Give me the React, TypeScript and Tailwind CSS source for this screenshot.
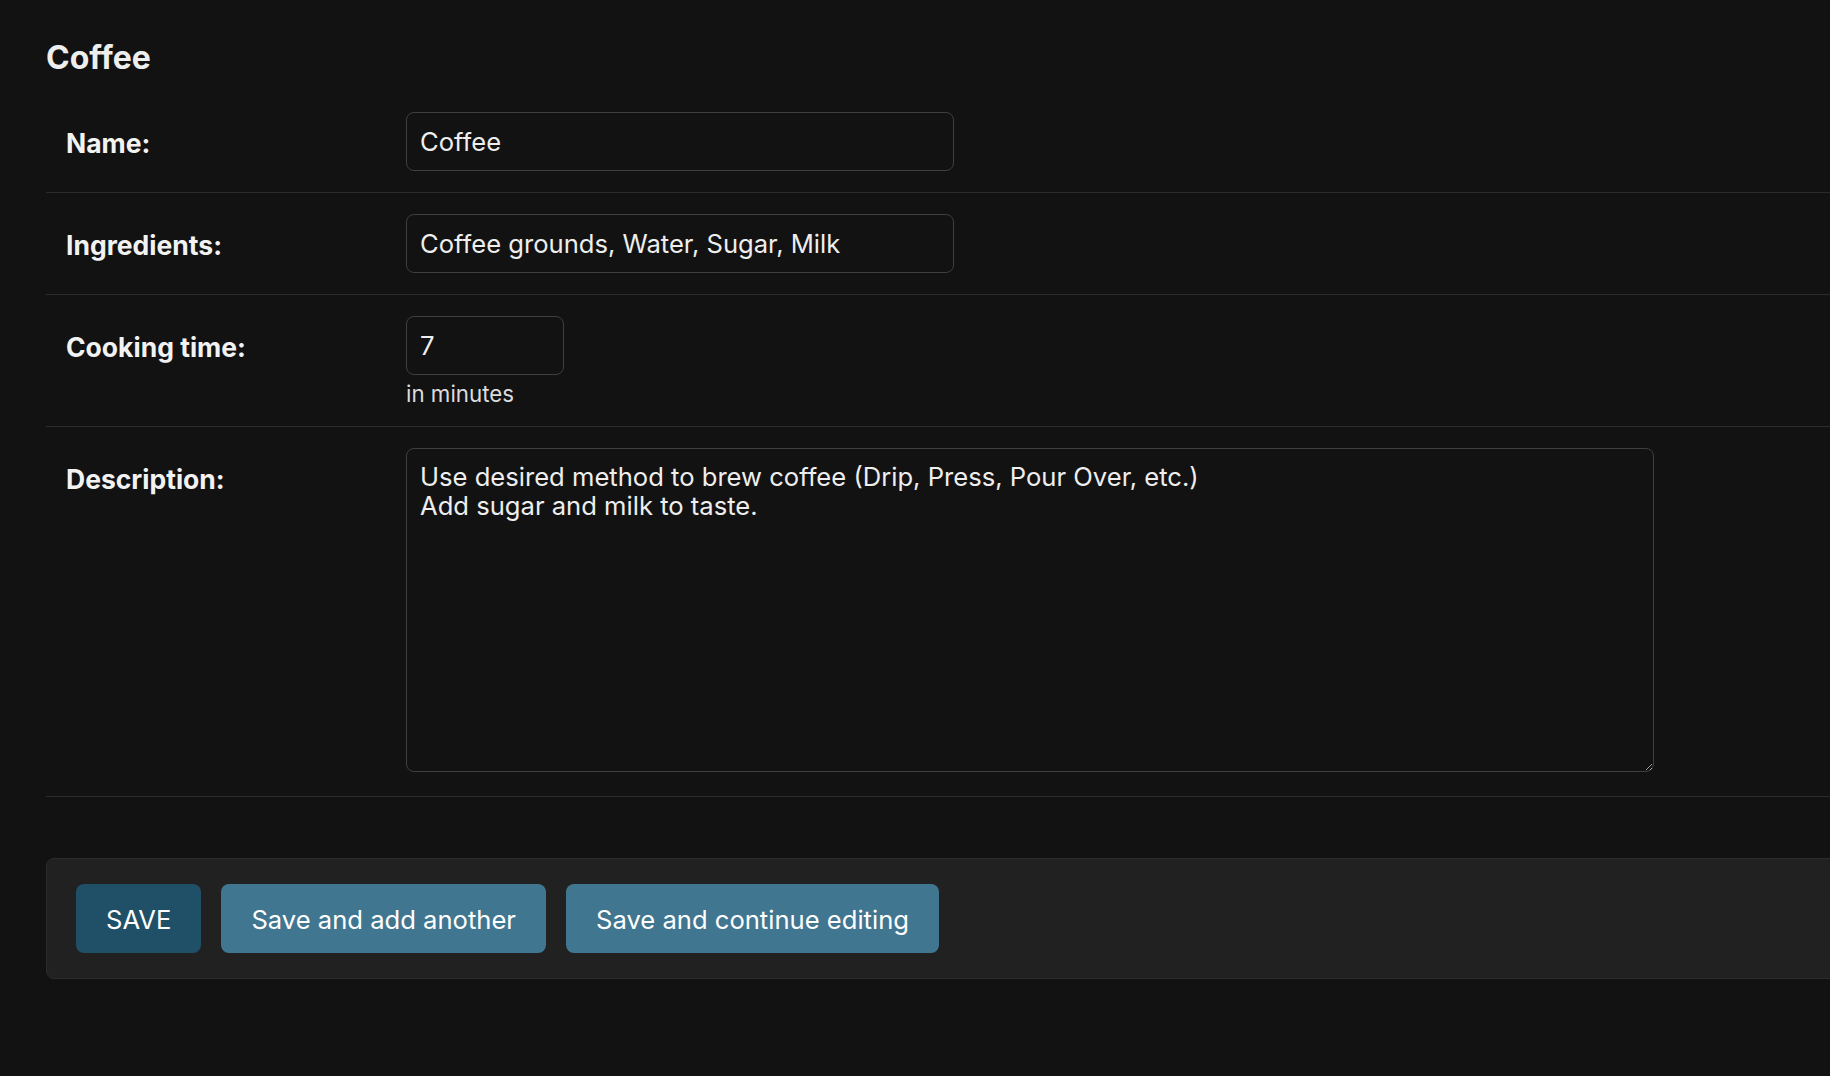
import React from 'react';

const labelCls = "w-[340px] shrink-0 pt-[3px] text-[26.5px] leading-[56px] font-bold text-[#f2f2f2]";
const inputCls =
  "h-[59px] rounded-[8px] border border-[#3f3f3f] bg-[#121212] px-[13px] text-[25.6px] text-[#eeeeee] outline-none font-['Inter',sans-serif]";
const btnCls = "h-[69px] rounded-[8px] px-[30px] pt-[3px] text-[25.6px] text-white";

const FormRow: React.FC<{ label: string; children: React.ReactNode; last?: boolean }> = ({ label, children, last }) => (
  <div className={`flex border-b border-[#2c2c2c] pl-[20px] pt-[21px] ${last ? 'pb-[24px]' : 'pb-[21px]'}`}>
    <label className={labelCls}>{label}</label>
    <div className="flex flex-col">{children}</div>
  </div>
);

const App: React.FC = () => {
  return (
    <div className="min-h-[1076px] overflow-hidden bg-[#121212] font-['Inter',sans-serif] text-[#eeeeee] [color-scheme:dark]">
      <div className="w-[1860px] pl-[46px] pt-[39px]">
        <h2 className="text-[32px] font-bold leading-[38px] text-[#eeeeee]">Coffee</h2>

        <div className="mt-[14px]">
          <FormRow label="Name:">
            <input className={`${inputCls} w-[548px]`} defaultValue="Coffee" />
          </FormRow>

          <FormRow label="Ingredients:">
            <input className={`${inputCls} w-[548px]`} defaultValue="Coffee grounds, Water, Sugar, Milk" />
          </FormRow>

          <div className="flex border-b border-[#2c2c2c] pl-[20px] pt-[21px] pb-[19px]">
            <label className={labelCls}>Cooking time:</label>
            <div className="flex flex-col">
              <input className={`${inputCls} w-[158px]`} defaultValue="7" />
              <div className="mt-[5px] text-[22.3px] leading-[27px] text-[#dcdcdc]">in minutes</div>
            </div>
          </div>

          <FormRow label="Description:" last>
            <textarea
              className="block h-[324px] w-[1248px] rounded-[8px] border border-[#3f3f3f] bg-[#121212] px-[13px] pt-[13px] text-[25.6px] leading-[29px] text-[#eeeeee] outline-none font-['Inter',sans-serif]"
              defaultValue={"Use desired method to brew coffee (Drip, Press, Pour Over, etc.)\nAdd sugar and milk to taste."}
            />
          </FormRow>
        </div>

        {/* submit row */}
        <div className="mt-[61px] flex gap-[20px] rounded-[8px] border border-[#2c2c2c] bg-[#212121] py-[25px] pl-[29px]">
          <button className={`${btnCls} bg-[#205067]`}>SAVE</button>
          <button className={`${btnCls} bg-[#417690]`}>Save and add another</button>
          <button className={`${btnCls} bg-[#417690]`}>Save and continue editing</button>
        </div>
      </div>
    </div>
  );
};

export default App;
